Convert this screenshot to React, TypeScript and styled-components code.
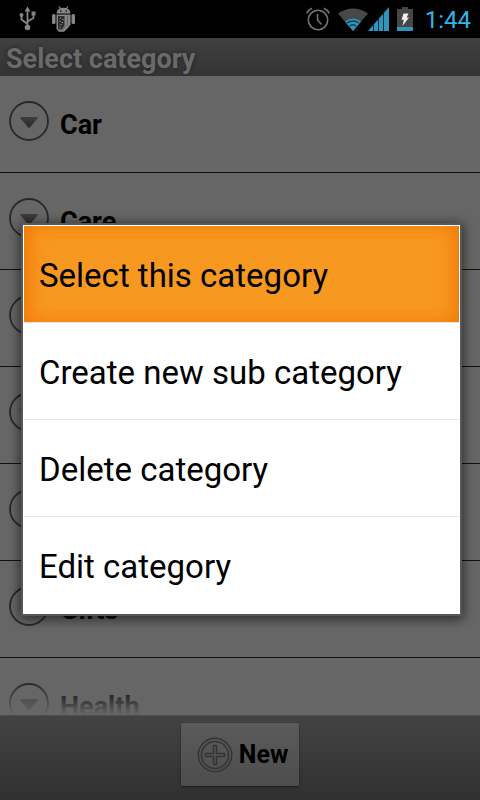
import React from "react";
import styled, { createGlobalStyle } from "styled-components";

const GlobalStyle = createGlobalStyle`
  * { box-sizing: border-box; }
  body {
    margin: 0;
    background: #000;
    font-family: Roboto, "Noto Sans", sans-serif;
  }
  button { font-family: inherit; margin: 0; cursor: pointer; }
`;

const Screen = styled.div`
  position: relative;
  display: flex;
  flex-direction: column;
  height: 100vh;
  overflow: hidden;
`;

const StatusBar = styled.header`
  flex: none;
  display: flex;
  align-items: center;
  justify-content: space-between;
  height: 38px;
  padding: 0 9px 0 18px;
  background: #000;
`;

const StatusGroup = styled.div<{ $gap: number }>`
  display: flex;
  align-items: center;
  gap: ${(p) => p.$gap}px;
`;

const Clock = styled.time`
  padding: 2px 0 0 4px;
  color: #33b5e5;
  font-size: 24px;
  line-height: 36px;
`;

const TitleBar = styled.h1`
  flex: none;
  margin: 0;
  height: 38px;
  padding: 0 6px;
  background: linear-gradient(#404040, #343434);
  color: #6a6a6a;
  font-size: 27px;
  font-weight: 700;
  line-height: 42px;
  text-shadow: 0 0 4px #222;
`;

const List = styled.ul`
  position: relative;
  flex: 1;
  min-height: 0;
  margin: 0;
  padding: 0;
  overflow: hidden;
  list-style: none;
  background: #666;

  &::after {
    content: "";
    position: absolute;
    inset: auto 0 0;
    height: 32px;
    background: linear-gradient(rgba(102, 102, 102, 0), #666);
  }
`;

const Row = styled.li`
  display: flex;
  align-items: center;
  gap: 10px;
  height: 97px;
  padding: 0 8px 6px;
  border-bottom: 1px solid #111;
`;

const ExpandButton = styled.button`
  display: flex;
  padding: 0;
  border: 0;
  background: none;
`;

const RowLabel = styled.span`
  padding-top: 7px;
  color: #000;
  font-size: 27px;
  font-weight: 700;
  line-height: 32px;
`;

const Footer = styled.footer`
  flex: none;
  display: flex;
  justify-content: center;
  height: 85px;
  padding: 7px 0 13px;
  border-top: 1px solid #4e4e4e;
  background: linear-gradient(#434343, #303030);
`;

const NewButton = styled.button`
  display: flex;
  align-items: center;
  gap: 6px;
  height: 63px;
  padding: 0 11px 0 16px;
  border: 0;
  border-radius: 1px;
  background: linear-gradient(#5b5b5b, #4d4d4d);
  box-shadow: 0 1px 2px #1a1a1a;
  color: #000;
  font-size: 25px;
  font-weight: 700;
`;

const Overlay = styled.div`
  position: absolute;
  inset: 39px 0 0;
  display: flex;
  align-items: center;
  padding: 0 18px 0 21px;
`;

const Dialog = styled.div`
  flex: 1;
  display: flex;
  flex-direction: column;
  padding: 1px 1px 0;
  border: 2px solid #575757;
  border-radius: 1px;
  background: #fff;
  box-shadow: 0 2px 12px 1px rgba(0, 0, 0, 0.6);
`;

const MenuItem = styled.button<{ $active?: boolean }>`
  height: 97px;
  padding: 3px 15px 0;
  border: 0;
  border-bottom: 1px solid #e6e6e6;
  background: ${(p) => (p.$active ? "#f79820" : "#fff")};
  box-shadow: ${(p) =>
    p.$active
      ? "inset 14px 0 20px -12px #f07808, inset -14px 0 20px -12px #f07808, inset 0 0 18px #f48412"
      : "none"};
  color: #000;
  font-size: 33px;
  line-height: 40px;
  text-align: left;

  &:last-child { border-bottom: 0; }
`;

const UsbIcon = () => (
  <svg width="20" height="26" viewBox="0 0 20 26" fill="none" stroke="#858585" strokeWidth="1.8" aria-hidden="true">
    <path d="M9.5 4v17M9.5 18L3.5 13.500V9.500M9.500 15.500L15.500 12V7" />
    <path d="M9.500 .500l3 5h-6z" fill="#858585" stroke="none" />
    <circle cx="9.500" cy="21.500" r="2.800" fill="#858585" stroke="none" />
    <circle cx="3.500" cy="9" r="2" fill="#858585" stroke="none" />
    <rect x="13.500" y="5.500" width="4" height="4" fill="#858585" stroke="none" />
  </svg>
);

const AndroidIcon = () => (
  <svg width="24" height="27" viewBox="0 0 24 27" fill="#858885" aria-hidden="true">
    <path d="M4.500 7.500C4.700 5 6 3.300 7.800 2.600L6.500.800l.900-.600L9 2.100a8 8 0 0 1 5 0L15.600.200l.9.600L15.200 2.600c1.800.7 3.100 2.400 3.300 4.900z" />
    <circle cx="8.800" cy="5" r=".8" fill="#000" />
    <circle cx="14.200" cy="5" r=".8" fill="#000" />
    <rect x="0" y="8" width="3.500" height="10" rx="1.500" />
    <rect x="19.500" y="8" width="3.500" height="10" rx="1.500" />
    <path d="M4.500 8.500h14v10l-3.500 4.500-3 2.800H7L4.500 23z" />
    <path d="M6 10h6.500v9.500l-2.500 4H7L6 22.500z" fill="#2c2c2c" />
    <path d="M15.500 9.500v8.500l-5 6.500" fill="none" stroke="#5d605d" strokeWidth="1" />
    <path d="M8 12h1m1.500 1.500h1M7.500 15.500h1m1.500 1h1M8.500 18.500h1m-2 2.500h1" stroke="#aaa" />
  </svg>
);

const AlarmIcon = () => (
  <svg width="24" height="24" viewBox="0 0 24 24" fill="none" stroke="#737373" strokeWidth="1.600" aria-hidden="true">
    <circle cx="12" cy="13" r="9.700" />
    <path d="M11.500 7v6l4 4.500M.800 6.300Q2.500 2.800 6 1.300M18 1.300Q21.500 2.800 23.200 6.300" />
  </svg>
);

const WifiIcon = () => (
  <svg width="30" height="23" viewBox="0 0 30 23" aria-hidden="true">
    <path d="M0 5.500Q15-4.500 30 5.500L15 23z" fill="#484848" />
    <path d="M7 13.500Q15 7.500 23 13.500L15 23z" fill="#2f95bd" />
    <path d="M9 15Q15 11 21 15M12 17.800Q15 15.800 18 17.800" fill="none" stroke="#123e50" strokeWidth="1.400" />
  </svg>
);

const SignalIcon = () => (
  <svg width="21" height="24" viewBox="0 0 21 24" aria-hidden="true">
    <path d="M0 24L21 0V24z" fill="#2f95bd" />
    <path d="M5.500 17v7M10.500 11v13M15.500 5v19" stroke="#0c2c3a" strokeWidth="1" />
  </svg>
);

const BatteryIcon = () => (
  <svg width="16" height="24" viewBox="0 0 16 24" aria-hidden="true">
    <path d="M5 0h6v2h5v22H0V2h5z" fill="#464646" />
    <rect y="20" width="16" height="4" fill="#2f95bd" />
    <path d="M6.500 6.500h5L9.700 10.500h2.300L5.500 19l1.300-6.200H4.500z" fill="#eee" />
  </svg>
);

const ExpandIcon = () => (
  <svg width="42" height="42" viewBox="0 0 42 42" aria-hidden="true">
    <defs>
      <linearGradient id="arrow" x1="0" y1="0" x2="0" y2="1">
        <stop offset="0" stopColor="#3e3e3e" />
        <stop offset="1" stopColor="#2a2a2a" />
      </linearGradient>
    </defs>
    <circle cx="21" cy="21" r="19" fill="none" stroke="#292929" strokeWidth="1.800" />
    <path d="M13 17h16q1.500 0 .5 1.500L22 27.200q-1 1-2 0L12.500 18.500Q11.500 17 13 17z" fill="url(#arrow)" />
  </svg>
);

const PlusIcon = () => (
  <svg width="36" height="36" viewBox="0 0 36 36" fill="none" stroke="#343434" strokeWidth="1.500" aria-hidden="true">
    <circle cx="18" cy="18" r="16.700" />
    <circle cx="18" cy="18" r="13.500" />
    <path d="M16.500 8.500h3v8h8v3h-8v8h-3v-8h-8v-3h8z" strokeLinejoin="round" />
  </svg>
);

const categories = ["Car", "Care", "", "", "", "Gifts", "Health"];
const actions = ["Select this category", "Create new sub category", "Delete category", "Edit category"];

export default function App() {
  return (
    <>
      <GlobalStyle />
      <Screen>
        <StatusBar>
          <StatusGroup $gap={14}>
            <UsbIcon />
            <AndroidIcon />
          </StatusGroup>
          <StatusGroup $gap={8}>
            <AlarmIcon />
            <StatusGroup $gap={0}>
              <WifiIcon />
              <SignalIcon />
            </StatusGroup>
            <BatteryIcon />
            <Clock>1:44</Clock>
          </StatusGroup>
        </StatusBar>
        <TitleBar>Select category</TitleBar>
        <List>
          {categories.map((name, i) => (
            <Row key={i}>
              <ExpandButton type="button" aria-label={`Expand ${name}`.trim()}>
                <ExpandIcon />
              </ExpandButton>
              <RowLabel>{name}</RowLabel>
            </Row>
          ))}
        </List>
        <Footer>
          <NewButton type="button">
            <PlusIcon />
            New
          </NewButton>
        </Footer>
        <Overlay>
          <Dialog role="dialog" aria-label="Category actions">
            {actions.map((label, i) => (
              <MenuItem key={label} type="button" $active={i === 0}>
                {label}
              </MenuItem>
            ))}
          </Dialog>
        </Overlay>
      </Screen>
    </>
  );
}
